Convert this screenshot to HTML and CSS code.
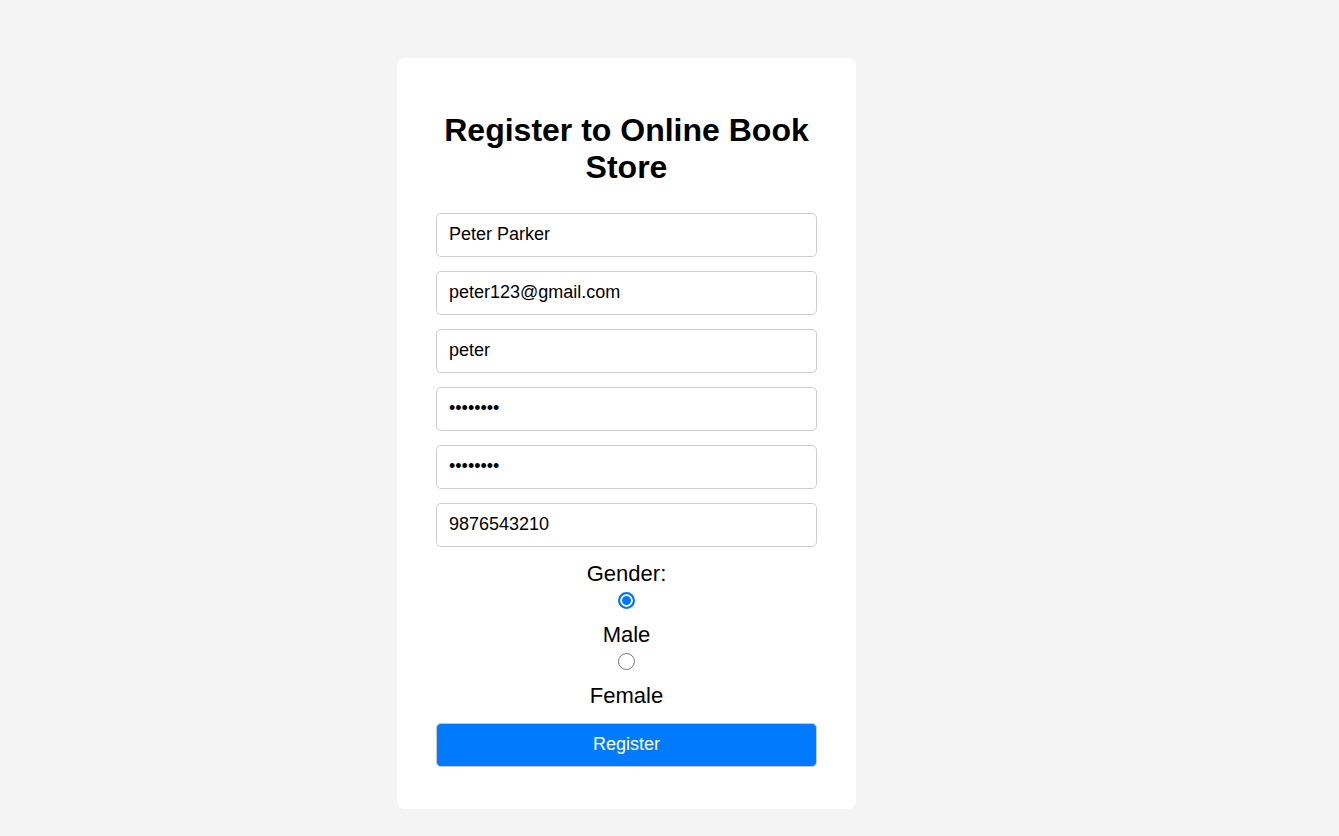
FILE: index.html
```html
<!DOCTYPE html>
<html lang="en">
<head>
<meta charset="utf-8">
<title>Register</title>
<link rel="stylesheet" href="styles.css">
</head>
<body>
<main class="page">
  <form class="card">
    <h1 class="title">Register to Online Book Store</h1>
    <div class="fields">
      <input class="field" type="text" value="Peter Parker">
      <input class="field" type="email" value="peter123@gmail.com">
      <input class="field" type="text" value="peter">
      <input class="field" type="password" value="peter123">
      <input class="field" type="password" value="peter123">
      <input class="field" type="tel" value="9876543210">
    </div>
    <div class="gender">
      <span class="label">Gender:</span>
      <input class="radio" type="radio" name="gender" id="male" checked>
      <label class="label" for="male">Male</label>
      <input class="radio" type="radio" name="gender" id="female">
      <label class="label" for="female">Female</label>
    </div>
    <button class="submit" type="button">Register</button>
  </form>
</main>
</body>
</html>
```

FILE: styles.css
```css
html, body {
  margin: 0;
  padding: 0;
}
body {
  background: #f4f4f4;
  font-family: "Liberation Sans", Arial, sans-serif;
  color: #000;
}
.page {
  display: flex;
  align-items: flex-start;
  padding: 58px 0 0 397px;
  min-height: 836px;
  box-sizing: border-box;
}
.card {
  width: 459px;
  box-sizing: border-box;
  background: #fff;
  border-radius: 8px;
  padding: 54px 39px 42px;
  display: flex;
  flex-direction: column;
}
.title {
  margin: 0 0 27px;
  font-size: 32px;
  font-weight: bold;
  text-align: center;
  line-height: 36.8px;
}
.fields {
  display: flex;
  flex-direction: column;
  gap: 14px;
}
.field {
  display: block;
  width: 100%;
  box-sizing: border-box;
  height: 44px;
  margin: 0;
  padding: 0 12px;
  border: 1px solid #ccc;
  border-radius: 5px;
  font-family: "Liberation Sans", Arial, sans-serif;
  font-size: 18px;
  color: #000;
  background: #fff;
  outline: none;
}
.gender {
  display: flex;
  flex-direction: column;
  align-items: center;
  margin-top: 14px;
}
.label {
  font-size: 22px;
  line-height: 25px;
}
.radio {
  appearance: none;
  -webkit-appearance: none;
  box-sizing: border-box;
  width: 17px;
  height: 17px;
  margin: 6px 0 13px;
  border: 1.5px solid #767676;
  border-radius: 50%;
  background: #fff;
}
.radio:checked {
  border: 2px solid #0075ff;
  background: #0075ff;
  box-shadow: inset 0 0 0 2px #fff;
}
.submit {
  margin-top: 15px;
  height: 44px;
  width: 100%;
  background: #007bff;
  color: #fff;
  border: 1px solid #c8c8c8;
  border-radius: 5px;
  font-family: "Liberation Sans", Arial, sans-serif;
  font-size: 18px;
  cursor: pointer;
}
```
